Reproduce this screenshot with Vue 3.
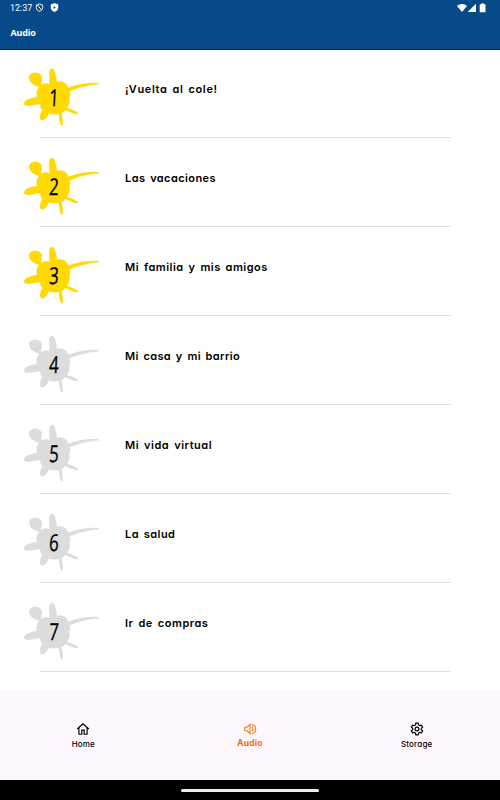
<script setup>
    import { ref } from 'vue';

    const units = [
        { number: 1, title: '¡Vuelta al cole!', tracking: 0.63, unlocked: true },
        { number: 2, title: 'Las vacaciones', tracking: 0.41, unlocked: true },
        { number: 3, title: 'Mi familia y mis amigos', tracking: 0.5, unlocked: true },
        { number: 4, title: 'Mi casa y mi barrio', tracking: 0.36, unlocked: false },
        { number: 5, title: 'Mi vida virtual', tracking: 0.54, unlocked: false },
        { number: 6, title: 'La salud', tracking: 0.44, unlocked: false },
        { number: 7, title: 'Ir de compras', tracking: 0.54, unlocked: false }
    ];

    const tab = ref('Audio');
</script>

<template>
    <div class="app">
        <header class="header">
            <div class="status">
                <span class="time">12:37</span>
                <svg class="status-shield" viewBox="0 0 24 24" fill="none" stroke="#fff" stroke-width="2.6">
                    <path d="M12 2.5 20.5 6v6c0 5-4 8.500-8.500 10C7.500 20.500 3.500 17 3.500 12V6Z" />
                    <path d="M6 5l12 14" />
                </svg>
                <svg class="status-shield second" viewBox="0 0 24 24">
                    <path fill="#fff" d="M12 0 22 4v8c0 6-4.500 10-10 12C6.500 22 2 18 2 12V4Z" />
                    <path fill="#064a89" d="M9.500 8 15.500 12l-6 4Z" />
                </svg>
                <svg class="signals" viewBox="0 0 30 10" fill="#fff">
                    <path d="M0 3.100C2.600.3 7.400.3 10 3.100L5 9Z" />
                    <path d="M19 .8V9h-8.400Z" />
                    <path d="M23.300 1.200h1.200V.3h2.200v.9h1.200q.6 0 .6.600V8.600q0 .6-.6.600h-4.600q-.6 0-.6-.6V1.800q0-.6.600-.6Z" />
                </svg>
            </div>
            <h1>Audio</h1>
        </header>

        <main class="list">
            <div v-for="unit in units" :key="unit.number" class="unit">
                <!-- Paint splat with the unit number -->
                <svg class="splat" :class="{ locked: !unit.unlocked }" viewBox="0 0 285 225">
                    <path d="M78 76C87 69 98 70 104 74L103 44C102 31 107 27 112 27C119 28 122 42 126 66C142 60 156 71 160 83C185 74 216 68 246 69Q252 70 250 73C222 75 188 83 163 94C167 101 166 109 162 113C166 122 162 134 155 144Q176 149 189 159Q188 163 182 162Q164 157 151 149Q145 158 139 159Q144 178 143 195Q140 197 137 193Q133 180 132 161C119 164 107 163 101 160C98 170 90 182 80 181C72 177 75 161 83 150Q76 144 75 131C59 134 43 139 31 136C23 132 29 122 40 118Q54 112 67 111C62 101 66 89 73 80C55 76 40 65 43 49C47 36 69 35 78 46C84 55 77 64 78 76Z" />
                    <text x="117" y="137" text-anchor="middle" class="number">{{ unit.number }}</text>
                </svg>
                <span class="title" :style="{ letterSpacing: unit.tracking + 'px' }">{{ unit.title }}</span>
            </div>
        </main>

        <nav class="tabs">
            <button class="tab" :class="{ active: tab === 'Home' }" @click="tab = 'Home'">
                <svg viewBox="0 0 24 24" fill="none" stroke="currentColor" stroke-width="2">
                    <path d="M2 12 12 3l10 9M5 10v11h5v-7h4v7h5V10" />
                </svg>
                <span>Home</span>
            </button>
            <button class="tab" :class="{ active: tab === 'Audio' }" @click="tab = 'Audio'">
                <svg viewBox="0 0 24 24" fill="none" stroke="currentColor" stroke-width="2">
                    <path d="M3 9v6h4l5 5V4L7 9Z" />
                    <path d="M15 8q4 4 0 8M15 4c9 2 9 14 0 16" />
                </svg>
                <span>Audio</span>
            </button>
            <button class="tab" :class="{ active: tab === 'Storage' }" @click="tab = 'Storage'">
                <svg viewBox="0 0 24 24" fill="none" stroke="currentColor" stroke-width="2">
                    <path d="M10 2h4l.6 3 2.200 1.300L19.700 5.300l2 3.500-2.300 2v2.400l2.300 2-2 3.500-2.900-1L14.600 19 14 22h-4l-.6-3-2.200-1.300-2.900 1-2-3.500 2.300-2v-2.400l-2.300-2 2-3.500 2.900 1L9.400 5Z" />
                    <circle cx="12" cy="12" r="3.300" />
                </svg>
                <span>Storage</span>
            </button>
        </nav>

        <footer class="gesture-bar">
            <div class="pill"></div>
        </footer>
    </div>
</template>

<style>
    body {
        margin: 0;
        background: #fff;
    }
</style>

<style scoped>
    .app {
        width: 500px;
        height: 800px;
        display: flex;
        flex-direction: column;
        overflow: hidden;
        background: #fff;
        font-family: Inter, "Noto Sans", sans-serif;
        font-feature-settings: "cv11";
    }

    .header {
        box-sizing: border-box;
        height: 50px;
        flex: none;
        background: #064a89;
        border-bottom: 1px solid #022b6c;
        color: #fff;
    }

    .status {
        display: flex;
        align-items: center;
        height: 15px;
        padding: 0 13px 0 10px;
    }

    .time {
        width: 25px;
        font: 9px Roboto, sans-serif;
    }

    .status-shield {
        width: 9px;
        height: 9px;
    }

    .status-shield.second {
        margin-left: 6px;
    }

    .signals {
        width: 30px;
        height: 10px;
        margin-left: auto;
    }

    h1 {
        margin: 11px 0 0 10.5px;
        font: 700 9px/13px "Noto Sans", sans-serif;
        letter-spacing: -.2px;
    }

    .list {
        height: 640px;
        flex: none;
        margin-top: -1px;
    }

    .unit {
        display: flex;
        height: 89px;
        padding-left: 15px;
        background: linear-gradient(#e0e0e0, #e0e0e0) 40px 88px / 411px 1px no-repeat;
    }

    .splat {
        width: 95px;
        height: 75px;
        flex: none;
        margin-top: 11px;
        fill: #ffd900;
        stroke: #ffd900;
        stroke-width: 1px;
    }

    .splat.locked {
        fill: #dcdcdc;
        stroke: #dcdcdc;
    }

    .number {
        fill: #000;
        stroke: #000;
        stroke-width: 1px;
        font: 500 70px "Open Sans", sans-serif;
        transform: translate(117px, 0) skewX(-3deg) scaleX(.72) translate(-109px, 0);
    }

    .title {
        margin: 33px 0 0 15px;
        font-size: 11px;
        font-weight: 600;
        line-height: 15px;
        word-spacing: 1.6px;
        white-space: nowrap;
        color: #000;
    }

    .tabs {
        display: flex;
        box-sizing: border-box;
        height: 90px;
        flex: none;
        margin-top: 1px;
        padding-top: 32px;
        background: #fef7ff;
    }

    .tab {
        display: flex;
        flex: 1;
        flex-direction: column;
        align-items: center;
        gap: 2px;
        padding: 0;
        border: 0;
        background: none;
        color: #000;
        font: 500 8px/13px Inter, sans-serif;
        font-feature-settings: "cv11";
        letter-spacing: .2px;
    }

    .tab svg {
        width: 14px;
        height: 14px;
    }

    .tab.active {
        gap: 1px;
        color: #ee6c08;
        font-size: 8.5px;
        font-weight: 700;
    }

    .tab.active svg {
        color: #f58216;
    }

    .gesture-bar {
        display: flex;
        align-items: center;
        justify-content: center;
        height: 20px;
        flex: none;
        background: #000;
    }

    .pill {
        width: 138px;
        height: 3px;
        border-radius: 2px;
        background: #eee;
    }
</style>
